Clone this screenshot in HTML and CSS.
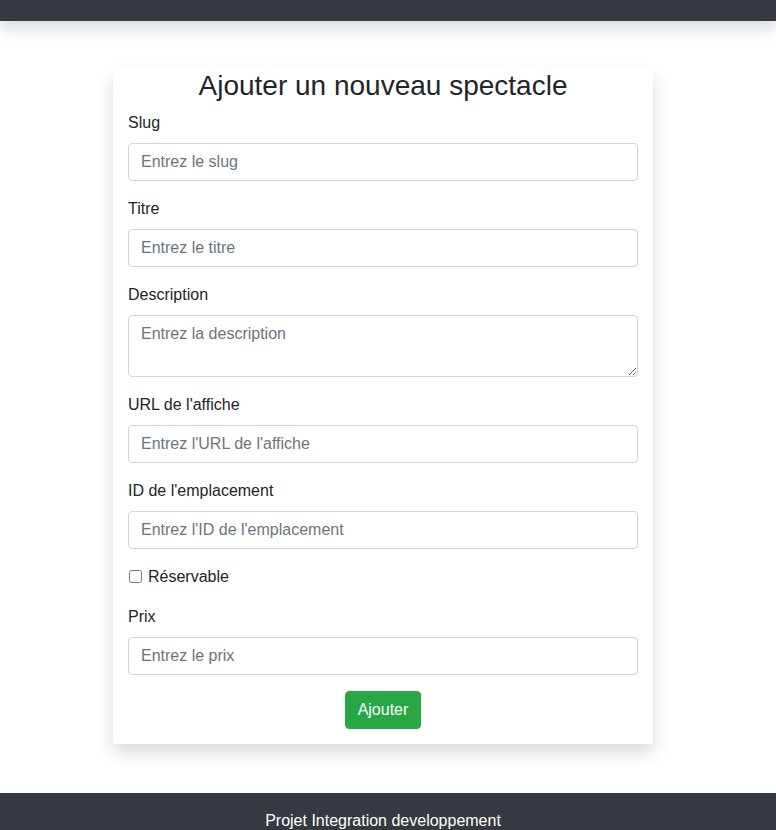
FILE: index.html
```html
<!DOCTYPE html>
<html lang="fr">
<head>
<meta charset="utf-8">
<title>Ajouter un nouveau spectacle</title>
<link rel="stylesheet" href="styles.css">
</head>
<body>
<header class="topbar"></header>
<main class="main">
  <div class="card">
    <h3 class="title">Ajouter un nouveau spectacle</h3>
    <form class="form">
      <div class="group">
        <label class="label" for="slug">Slug</label>
        <input class="control" id="slug" type="text" placeholder="Entrez le slug">
      </div>
      <div class="group">
        <label class="label" for="titre">Titre</label>
        <input class="control" id="titre" type="text" placeholder="Entrez le titre">
      </div>
      <div class="group">
        <label class="label" for="desc">Description</label>
        <textarea class="control area" id="desc" rows="2" placeholder="Entrez la description"></textarea>
      </div>
      <div class="group">
        <label class="label" for="url">URL de l'affiche</label>
        <input class="control" id="url" type="text" placeholder="Entrez l'URL de l'affiche">
      </div>
      <div class="group">
        <label class="label" for="loc">ID de l'emplacement</label>
        <input class="control" id="loc" type="text" placeholder="Entrez l'ID de l'emplacement">
      </div>
      <div class="group check">
        <input class="checkbox" id="res" type="checkbox">
        <label class="check-label" for="res">Réservable</label>
      </div>
      <div class="group">
        <label class="label" for="prix">Prix</label>
        <input class="control" id="prix" type="text" placeholder="Entrez le prix">
      </div>
      <div class="actions">
        <button class="btn" type="button">Ajouter</button>
      </div>
    </form>
  </div>
</main>
<footer class="footer">
  <p class="footer-text">Projet Integration developpement</p>
</footer>
</body>
</html>
```
FILE: styles.css
```css
* { box-sizing: border-box; }
html, body { margin: 0; padding: 0; }
body {
  font-family: "Liberation Sans", Arial, sans-serif;
  font-size: 16px;
  line-height: 1.5;
  color: #212529;
  background: #fff;
}
.topbar {
  height: 21px;
  background: #343a40;
  box-shadow: 0 8px 16px rgba(0,0,0,.15);
  position: relative;
  z-index: 1;
}
.main {
  padding: 48px 10px 49px 0;
}
.card {
  width: 540px;
  margin: 0 auto;
  padding: 0 15px 15px;
  background: #fff;
  box-shadow: 0 8px 16px rgba(0,0,0,.15);
}
.title {
  margin: 0 0 8px;
  font-size: 28px;
  font-weight: 500;
  line-height: 1.2;
  text-align: center;
}
.form { margin: 0; }
.group { margin-bottom: 16px; }
.label {
  display: inline-block;
  margin-bottom: 8px;
}
.control {
  display: block;
  width: 100%;
  height: 38px;
  padding: 6px 12px;
  font-family: inherit;
  font-size: 16px;
  line-height: 1.5;
  color: #495057;
  background: #fff;
  border: 1px solid #ced4da;
  border-radius: 4px;
}
.control::placeholder { color: #6c757d; opacity: 1; }
.area {
  height: 62px;
  resize: vertical;
}
.check {
  display: flex;
  align-items: center;
  height: 24px;
}
.checkbox {
  width: 13px;
  height: 13px;
  margin: 0 6px 0 1px;
}
.actions { text-align: center; }
.btn {
  display: inline-block;
  padding: 6px 12px;
  font-family: inherit;
  font-size: 16px;
  line-height: 1.5;
  color: #fff;
  background: #28a745;
  border: 1px solid #28a745;
  border-radius: 4px;
}
.footer {
  background: #343a40;
  color: #fff;
  padding: 16px 10px 16px 0;
  text-align: center;
}
.footer-text { margin: 0; }
```
